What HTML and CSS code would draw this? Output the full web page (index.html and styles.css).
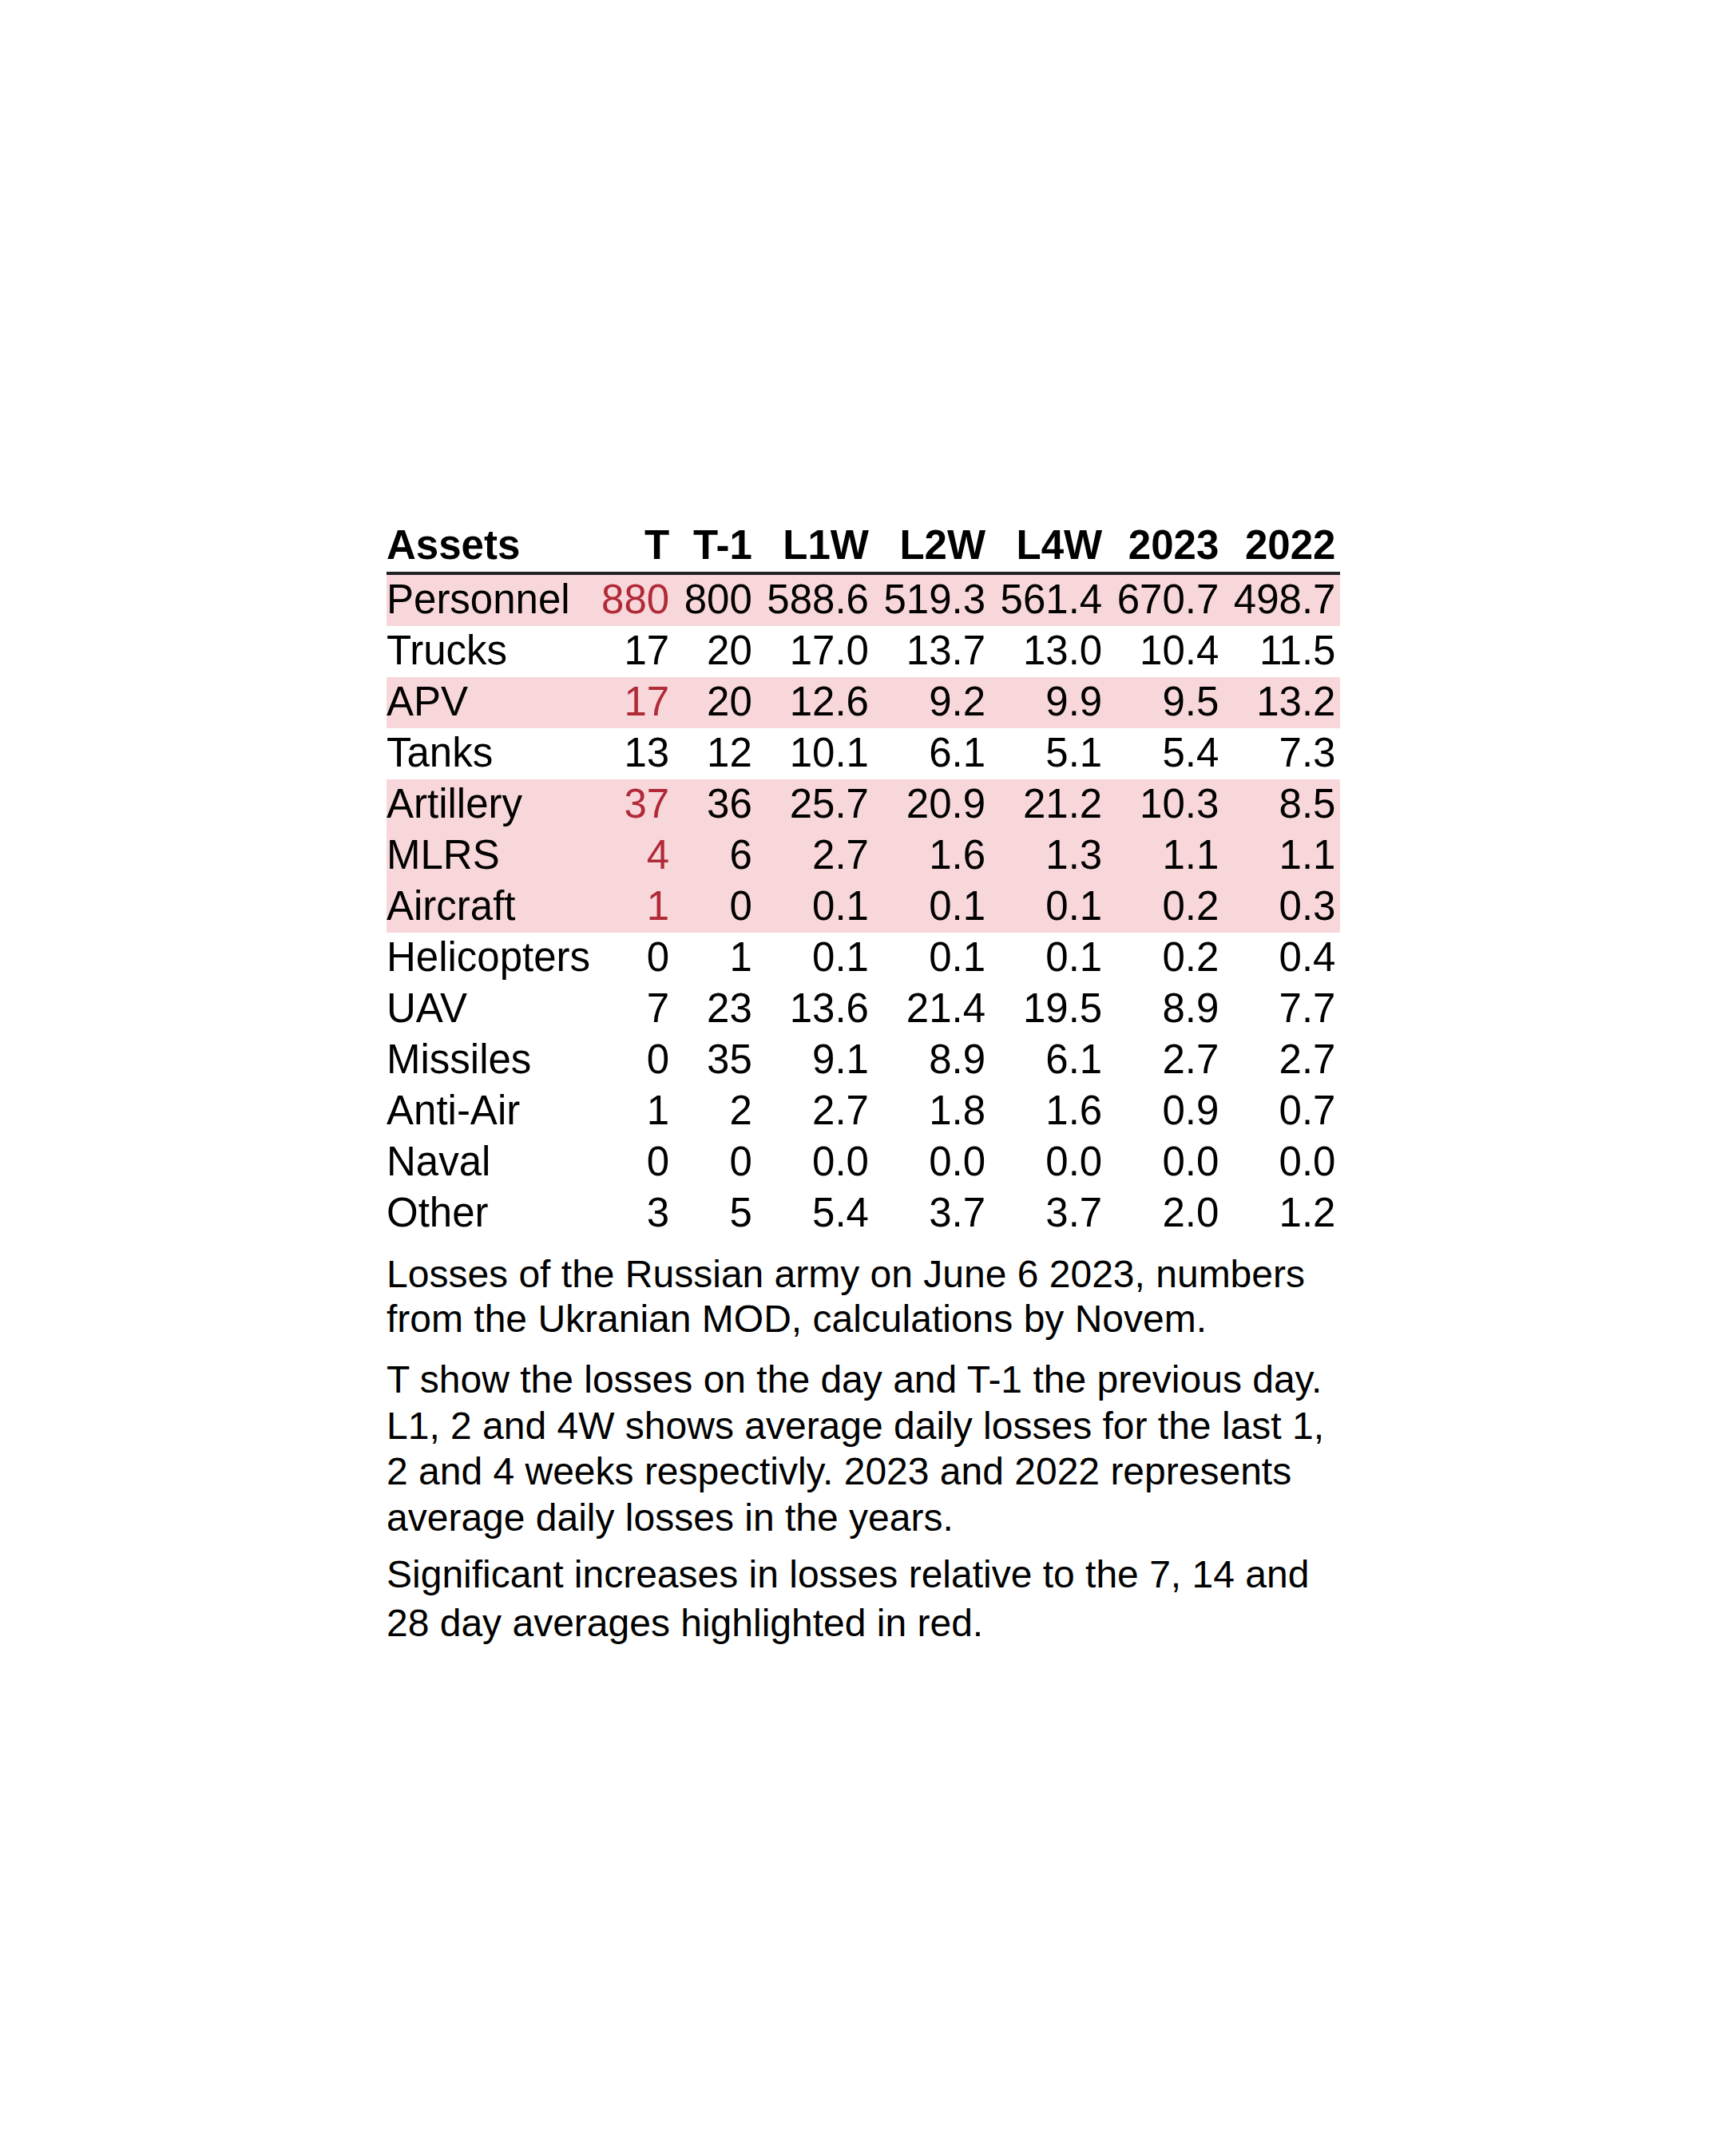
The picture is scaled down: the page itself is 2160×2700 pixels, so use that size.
FILE: index.html
```html
<!DOCTYPE html>
<html lang="en">
<head>
<meta charset="utf-8">
<title>Russian army losses</title>
<link rel="stylesheet" href="styles.css">
</head>
<body>
<main class="page">
  <table class="losses">
    <thead>
      <tr><th class="name">Assets</th><th class="first">T</th><th>T-1</th><th>L1W</th><th>L2W</th><th>L4W</th><th>2023</th><th class="last">2022</th></tr>
    </thead>
    <tbody>
      <tr class="hi"><td class="name">Personnel</td><td class="first up">880</td><td>800</td><td>588.6</td><td>519.3</td><td>561.4</td><td>670.7</td><td class="last">498.7</td></tr>
      <tr><td class="name">Trucks</td><td class="first">17</td><td>20</td><td>17.0</td><td>13.7</td><td>13.0</td><td>10.4</td><td class="last">11.5</td></tr>
      <tr class="hi"><td class="name">APV</td><td class="first up">17</td><td>20</td><td>12.6</td><td>9.2</td><td>9.9</td><td>9.5</td><td class="last">13.2</td></tr>
      <tr><td class="name">Tanks</td><td class="first">13</td><td>12</td><td>10.1</td><td>6.1</td><td>5.1</td><td>5.4</td><td class="last">7.3</td></tr>
      <tr class="hi"><td class="name">Artillery</td><td class="first up">37</td><td>36</td><td>25.7</td><td>20.9</td><td>21.2</td><td>10.3</td><td class="last">8.5</td></tr>
      <tr class="hi"><td class="name">MLRS</td><td class="first up">4</td><td>6</td><td>2.7</td><td>1.6</td><td>1.3</td><td>1.1</td><td class="last">1.1</td></tr>
      <tr class="hi"><td class="name">Aircraft</td><td class="first up">1</td><td>0</td><td>0.1</td><td>0.1</td><td>0.1</td><td>0.2</td><td class="last">0.3</td></tr>
      <tr><td class="name">Helicopters</td><td class="first">0</td><td>1</td><td>0.1</td><td>0.1</td><td>0.1</td><td>0.2</td><td class="last">0.4</td></tr>
      <tr><td class="name">UAV</td><td class="first">7</td><td>23</td><td>13.6</td><td>21.4</td><td>19.5</td><td>8.9</td><td class="last">7.7</td></tr>
      <tr><td class="name">Missiles</td><td class="first">0</td><td>35</td><td>9.1</td><td>8.9</td><td>6.1</td><td>2.7</td><td class="last">2.7</td></tr>
      <tr><td class="name">Anti-Air</td><td class="first">1</td><td>2</td><td>2.7</td><td>1.8</td><td>1.6</td><td>0.9</td><td class="last">0.7</td></tr>
      <tr><td class="name">Naval</td><td class="first">0</td><td>0</td><td>0.0</td><td>0.0</td><td>0.0</td><td>0.0</td><td class="last">0.0</td></tr>
      <tr><td class="name">Other</td><td class="first">3</td><td>5</td><td>5.4</td><td>3.7</td><td>3.7</td><td>2.0</td><td class="last">1.2</td></tr>
    </tbody>
  </table>
  <p class="note note-1">Losses of the Russian army on June 6 2023, numbers from the Ukranian MOD, calculations by Novem.</p>
  <p class="note note-2">T show the losses on the day and T-1 the previous day. L1, 2 and 4W shows average daily losses for the last 1, 2 and 4 weeks respectivly. 2023 and 2022 represents average daily losses in the years.</p>
  <p class="note note-3">Significant increases in losses relative to the 7, 14 and 28 day averages highlighted in red.</p>
</main>
</body>
</html>
```

FILE: styles.css
```css
html, body {
  margin: 0;
  padding: 0;
  background: #ffffff;
}

body {
  font-family: "Liberation Sans", Arial, sans-serif;
  color: #000000;
}

.page {
  padding: 651.8px 0 0 484px;
  width: 1196px;
}

.losses {
  border-collapse: separate;
  border-spacing: 0;
  font-size: 51px;
}

.losses th,
.losses td {
  white-space: nowrap;
  text-align: right;
  padding: 0 0 0 18.5px;
}

.losses th {
  font-weight: bold;
  line-height: 61px;
  padding-bottom: 3.2px;
  border-bottom: 4px solid #222222;
}

.losses td {
  font-weight: normal;
  line-height: 61px;
  padding-bottom: 3px;
}

.losses .name {
  text-align: left;
  padding-left: 0;
}

.losses .first {
  padding-left: 14px;
}

.losses .last {
  padding-right: 6px;
}

.losses tr.hi td {
  background: #f8d7da;
}

.losses td.up {
  color: #b02a37;
}

.note {
  font-size: 48px;
  margin: 0;
  width: 1196px;
}

.note-1 {
  line-height: 56px;
  margin-top: 15.7px;
}

.note-2 {
  line-height: 57.6px;
  margin-top: 19.3px;
}

.note-3 {
  line-height: 61px;
  margin-top: 11.3px;
}
```
